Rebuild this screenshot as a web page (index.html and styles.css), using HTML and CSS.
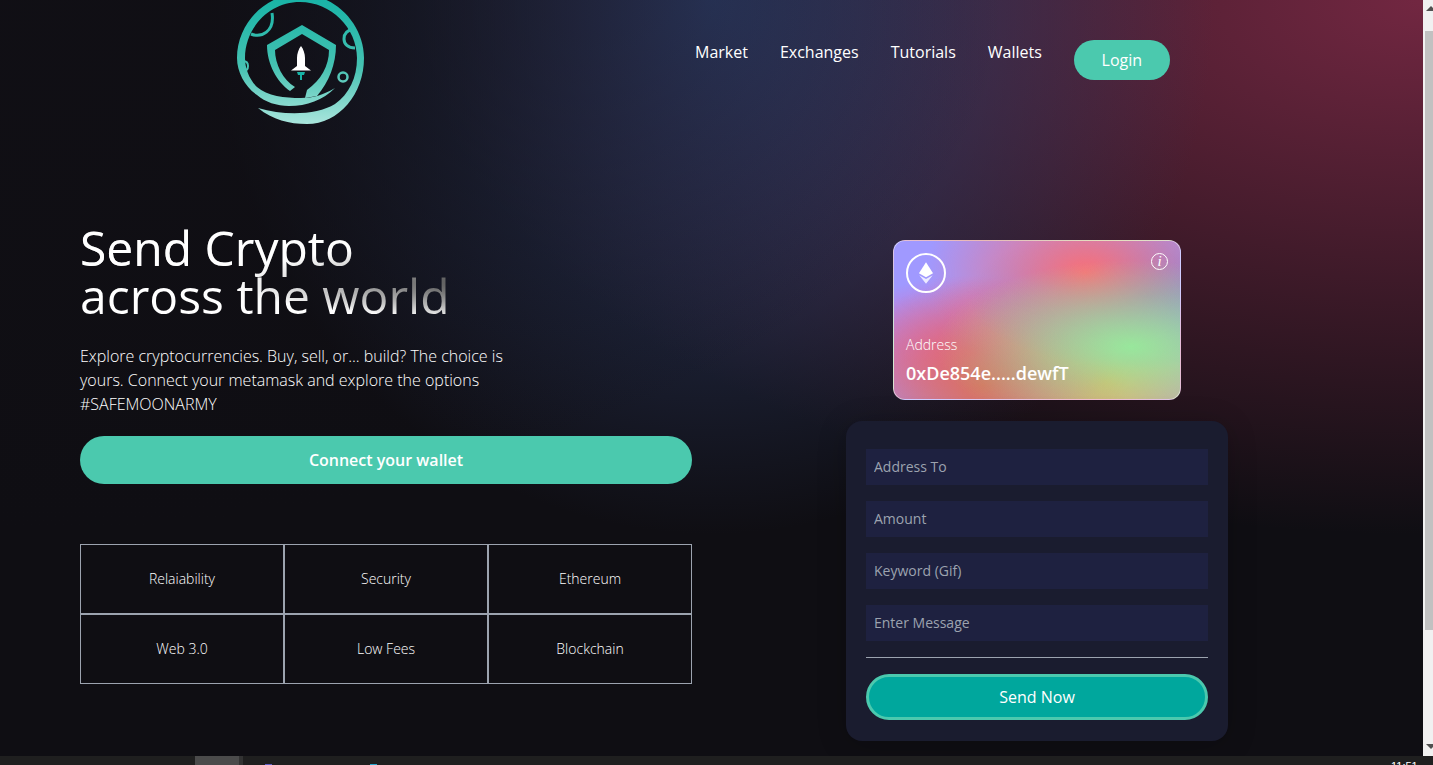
FILE: index.html
```html
<!doctype html>
<html>
<head>
<meta charset="utf-8">
<title>Send Crypto</title>
<link rel="stylesheet" href="styles.css">
</head>
<body>
<div class="screen">
	<div class="page">
		<header class="top">
			<svg class="logo" viewBox="0 0 128 128" width="128" height="128">
				<defs>
					<linearGradient id="teal" gradientUnits="userSpaceOnUse" x1="64" y1="0" x2="64" y2="128">
						<stop offset="0" stop-color="#17b3a6"/>
						<stop offset="0.55" stop-color="#45c2b2"/>
						<stop offset="1" stop-color="#a9e5dc"/>
					</linearGradient>
				</defs>
				<path d="M21 112C36 124 52 128 70 128C102 128 127 98 127 62C127 28 98 -2 63 -2C28 -2 0 28 0 62C0 76 8 91 20 99C28 106 40 110 52 110C70 110 86 104 98 92C86 99 76 102 64 102C48 102 30 100 20 91C12 83 8 72 8 62C8 32 32 6 63 6C94 6 120 32 120 62C120 82 112 98 98 108C80 119 48 120 21 112Z" fill="url(#teal)"/>
				<path d="M14 38C24 42 38 36 35 17" fill="none" stroke="url(#teal)" stroke-width="3"/>
				<path d="M117 33C110 34 107 38 107 43C107 48 111 52 118 52" fill="none" stroke="url(#teal)" stroke-width="3"/>
				<path d="M6 65C9 65 11 67 11 70C11 73 9 75 6 75" fill="none" stroke="url(#teal)" stroke-width="2"/>
				<circle cx="106" cy="81" r="4.500" fill="none" stroke="url(#teal)" stroke-width="2.500"/>
				<path d="M53 95C40 86 30 68 30 49L65 29L99 49C99 68 92 86 80 100L68 102L70 94C84 84 92 70 92 54L65 38L38 54C38 68 46 84 58 91Z" fill="url(#teal)"/>
				<path d="M64 50C66.500 53 68 58 68 62V70L74 74.500H54L60 70V62C60 58 61.500 53 64 50Z" fill="#fff"/>
				<path d="M60 76H68L67 79H65V84H63V79H61Z" fill="#17b3a6"/>
			</svg>
			<nav class="menu">
				<a href="#">Market</a>
				<a href="#">Exchanges</a>
				<a href="#">Tutorials</a>
				<a href="#">Wallets</a>
				<a href="#" class="login">Login</a>
			</nav>
		</header>
		<main class="hero">
			<section class="intro">
				<h1>Send Crypto<br>across the world</h1>
				<p>Explore cryptocurrencies. Buy, sell, or... build? The choice is yours. Connect your metamask and explore the options #SAFEMOONARMY</p>
				<a href="#" class="connect">Connect your wallet</a>
				<div class="features">
					<div class="cell">Relaiability</div>
					<div class="cell">Security</div>
					<div class="cell">Ethereum</div>
					<div class="cell">Web 3.0</div>
					<div class="cell">Low Fees</div>
					<div class="cell">Blockchain</div>
				</div>
			</section>
			<section class="side">
				<div class="card">
					<div class="card_top">
						<span class="eth">
							<svg viewBox="0 0 24 24" width="26" height="26">
								<path d="M12 2L5.500 12.300L12 16L18.500 12.300Z" fill="#fff"/>
								<path d="M5.800 14L12 22L18.200 14L12 17.600Z" fill="#fff" fill-opacity="0.8"/>
							</svg>
						</span>
						<span class="info">i</span>
					</div>
					<div class="card_text">
						<span class="addr_label">Address</span>
						<span class="addr">0xDe854e.....dewfT</span>
					</div>
				</div>
				<form class="send">
					<input type="text" placeholder="Address To">
					<input type="text" placeholder="Amount">
					<input type="text" placeholder="Keyword (Gif)">
					<input type="text" placeholder="Enter Message">
					<div class="line"></div>
					<button type="button" class="send_btn">Send Now</button>
				</form>
			</section>
		</main>
	</div>
	<div class="scrollbar">
		<span class="arrow_up"></span>
		<span class="thumb"></span>
		<span class="arrow_down"></span>
	</div>
</div>
<div class="taskbar">
	<span class="task_active"></span>
	<span class="task_dot blue"></span>
	<span class="task_dot cyan"></span>
	<span class="clock">11:51</span>
</div>
</body>
</html>
```

FILE: styles.css
```css
body,h1,p,a,input,button,form{margin: 0; padding: 0;}
html,body{height: 100%; overflow: hidden;}
a{text-decoration: none; color: #fff;}
input,button{outline: 0; border: 0; font-family: inherit;}
body{
	font-family: "Open Sans","Noto Sans",sans-serif;
	color: #fff;
	background-color: #1f1f1f;
}
.screen{
	display: flex;
	height: 756px;
}
.page{
	flex: 1;
	overflow: hidden;
	background-color: #0f0e13;
	background-image:
		radial-gradient(at 0% 0%, hsla(253,16%,7%,1) 0, transparent 50%),
		radial-gradient(at 50% 0%, hsla(225,39%,30%,1) 0, transparent 50%),
		radial-gradient(at 100% 0%, hsla(339,49%,30%,1) 0, transparent 50%);
}
.top{
	display: flex;
	height: 124px;
	padding-left: 237px;
}
.logo{
	flex: none;
	margin-top: -4px;
	overflow: visible;
}
.menu{
	display: flex;
	align-items: flex-start;
	gap: 32px;
	margin-left: 330px;
	padding-top: 40px;
	font-size: 16px;
	line-height: 24px;
	font-weight: 500;
}
.login{
	width: 96px;
	height: 40px;
	line-height: 40px;
	text-align: center;
	border-radius: 20px;
	background-color: #4bc9ae;
}
.hero{
	display: flex;
	padding-left: 80px;
}
.intro{
	width: 612px;
	padding-top: 100px;
}
h1{
	width: 500px;
	font-size: 48px;
	line-height: 48px;
	font-weight: 400;
	background-color: #fff;
	background-image:
		radial-gradient(at 4% 36%, hsla(0,0%,100%,1) 0, transparent 53%),
		radial-gradient(at 100% 60%, rgb(0,0,0) 0, transparent 50%);
	-webkit-background-clip: text;
	background-clip: text;
	color: transparent;
}
.intro p{
	width: 440px;
	margin-top: 24px;
	font-size: 16px;
	line-height: 24px;
	font-weight: 340;
}
.connect{
	display: block;
	height: 48px;
	margin-top: 20px;
	line-height: 48px;
	text-align: center;
	font-size: 16px;
	font-weight: 600;
	border-radius: 24px;
	background-color: #4bc9ae;
}
.features{
	display: grid;
	grid-template-columns: repeat(3, 1fr);
	margin-top: 60px;
}
.cell{
	display: flex;
	align-items: center;
	justify-content: center;
	box-sizing: border-box;
	height: 70px;
	padding-bottom: 2px;
	font-size: 14px;
	font-weight: 340;
	border: 1px solid #9ca3af;
}
.side{
	display: flex;
	flex-direction: column;
	align-items: center;
	width: 382px;
	margin-left: 154px;
	padding-top: 116px;
}
.card{
	display: flex;
	flex-direction: column;
	justify-content: space-between;
	box-sizing: border-box;
	width: 288px;
	height: 160px;
	padding: 12px;
	border-radius: 12px;
	border: 1px solid rgba(255,255,255,0.5);
	background-color: #a099ff;
	background-image:
		radial-gradient(at 83% 67%, rgb(152,231,156) 0, transparent 58%),
		radial-gradient(at 67% 20%, hsla(357,94%,71%,1) 0, transparent 59%),
		radial-gradient(at 88% 35%, hsla(222,81%,65%,1) 0, transparent 50%),
		radial-gradient(at 31% 91%, hsla(9,61%,61%,1) 0, transparent 52%),
		radial-gradient(at 27% 71%, hsla(336,91%,65%,1) 0, transparent 49%),
		radial-gradient(at 74% 89%, hsla(30,98%,65%,1) 0, transparent 51%),
		radial-gradient(at 53% 75%, hsla(174,94%,68%,1) 0, transparent 45%);
}
.card_top{
	display: flex;
	justify-content: space-between;
	align-items: flex-start;
}
.eth{
	display: flex;
	align-items: center;
	justify-content: center;
	box-sizing: border-box;
	width: 40px;
	height: 40px;
	border: 2px solid #fff;
	border-radius: 50%;
}
.info{
	box-sizing: border-box;
	width: 17px;
	height: 17px;
	text-align: center;
	font-family: "Liberation Serif",serif;
	font-style: italic;
	font-size: 15px;
	line-height: 15px;
	border: 1px solid #fff;
	border-radius: 50%;
}
.card_text{
	display: flex;
	flex-direction: column;
	gap: 4px;
}
.addr_label{
	font-size: 14px;
	line-height: 20px;
	font-weight: 340;
}
.addr{
	font-size: 18px;
	line-height: 28px;
	font-weight: 600;
}
.send{
	display: flex;
	flex-direction: column;
	gap: 16px;
	box-sizing: border-box;
	width: 382px;
	height: 320px;
	margin-top: 21px;
	padding: 28px 20px 20px;
	border-radius: 16px;
	background-color: #1a1c2f;
	box-shadow: 0 4px 30px rgba(0,0,0,0.2);
}
.send input{
	flex: none;
	box-sizing: border-box;
	height: 36px;
	padding: 0 8px 2px;
	font-size: 14px;
	color: #fff;
	background-color: #1e2140;
}
.send input::placeholder{
	color: #9ca3af;
}
.line{
	height: 1px;
	background-color: #9ca3af;
}
.send_btn{
	height: 46px;
	font-size: 16px;
	font-weight: 500;
	color: #fff;
	border: 3px solid #4bc9ae;
	border-radius: 23px;
	background-color: #00a79d;
}
.scrollbar{
	flex: none;
	display: flex;
	flex-direction: column;
	align-items: flex-end;
	overflow: hidden;
	width: 10px;
	background-color: #f1f1f1;
}
.arrow_up,.arrow_down{
	flex: none;
	width: 0;
	height: 0;
	margin-right: -3px;
	border-left: 5px solid transparent;
	border-right: 5px solid transparent;
}
.arrow_up{
	margin-top: 6px;
	border-bottom: 5px solid #505050;
}
.thumb{
	flex: none;
	width: 8px;
	height: 599px;
	margin-top: 20px;
	background-color: #c1c1c1;
}
.arrow_down{
	margin-top: 114px;
	border-top: 5px solid #505050;
}
.taskbar{
	display: flex;
	align-items: flex-start;
	height: 9px;
	overflow: hidden;
	background-color: #1f1f1f;
	padding-left: 195px;
}
.task_active{
	width: 44px;
	height: 9px;
	background-color: #4b4b4b;
	border-right: 4px solid #333;
}
.task_dot{
	width: 7px;
	height: 9px;
	margin-top: 8px;
}
.blue{
	margin-left: 22px;
	background-color: #5f5fc8;
}
.cyan{
	margin-left: 98px;
	background-color: #25a5cc;
}
.clock{
	margin-left: 1014px;
	margin-top: 4px;
	font-family: "Liberation Sans",sans-serif;
	font-size: 11px;
	line-height: 12px;
	color: #fff;
}
```
